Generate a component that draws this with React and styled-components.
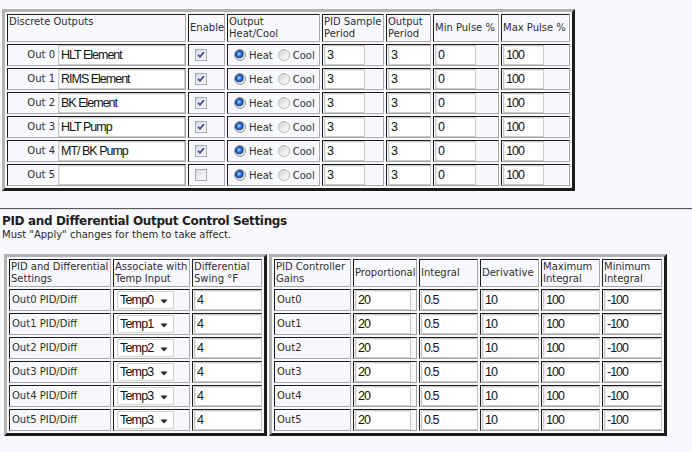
import React from 'react';
import styled, { createGlobalStyle } from 'styled-components';

const Global = createGlobalStyle`
  html, body { margin: 0; padding: 0; background: #f8f9fd; }
  body {
    font-family: "DejaVu Sans", Verdana, sans-serif;
    font-size: 10px;
    color: #2a2a2a;
  }
`;

const Page = styled.div`
  padding-top: 9px;
`;

const Indent = styled.div`
  padding-left: ${p => p.$x}px;
`;

const Grid = styled.table`
  border-collapse: separate;
  border-spacing: 2px;
  table-layout: fixed;
  box-sizing: border-box;
  width: ${p => p.$width}px;
  border: 3px solid;
  border-color: #b2b2b2 #1c1c1c #1c1c1c #b2b2b2;
  background: #f8f9fd;
`;

const Head = styled.th`
  box-sizing: border-box;
  width: ${p => p.$w}px;
  height: ${p => p.$h}px;
  border: 1px solid;
  border-color: #1c1c1c #a8a8a8 #a8a8a8 #1c1c1c;
  padding: 1px;
  font-weight: normal;
  text-align: left;
  vertical-align: ${p => (p.$top ? 'top' : 'middle')};
  line-height: 12px;
  white-space: nowrap;
  color: #2e2e2e;
`;

const Cell = styled.td`
  box-sizing: border-box;
  height: 22px;
  border: 1px solid;
  border-color: #1c1c1c #a8a8a8 #a8a8a8 #1c1c1c;
  padding: 0 ${p => (p.$flush ? 0 : 1)}px 0 1px;
  vertical-align: middle;
  line-height: 12px;
  white-space: nowrap;
  color: #2e2e2e;
`;

const NameRow = styled.div`
  display: flex;
  align-items: center;
  justify-content: flex-end;
  gap: 3px;
`;

const RowLabel = styled.span`
  padding-left: ${p => p.$pad || 0}px;
`;

const Field = styled.input`
  display: block;
  box-sizing: border-box;
  width: ${p => p.$w}px;
  height: 20px;
  margin: 0;
  padding: 0 2px;
  border: 1px solid #c8c8c8;
  box-shadow: inset 1px 1px 0 #ededed;
  background: #fff;
  font-family: "Liberation Sans", Arial, sans-serif;
  font-size: 12.5px;
  letter-spacing: -1px;
  color: #111;
  outline: none;
`;

const Check = styled.span`
  display: block;
  box-sizing: border-box;
  width: 12px;
  height: 12px;
  margin-left: 5px;
  border: 1px solid #a6a8b4;
  background: linear-gradient(135deg, #d9dae0 0%, #f4f4f6 70%, #fbfbfb 100%);
  svg { display: block; }
`;

const RadioRow = styled.div`
  display: flex;
  align-items: center;
`;

const Radio = styled.span`
  display: block;
  flex: none;
  box-sizing: border-box;
  width: 12px;
  height: 12px;
  margin-left: 5px;
  border-radius: 50%;
  border: 1px solid ${p => (p.$on ? '#8d97a8' : '#b9b9b9')};
  background: ${p =>
    p.$on
      ? 'radial-gradient(circle at 42% 40%, #cfe6ff 0, #4a8ae6 18%, #1a4fa8 40%, #233f72 48%, #dcdcdc 56%, #ffffff 100%)'
      : 'linear-gradient(135deg, #cfcfcf 0%, #ececec 55%, #ffffff 100%)'};
`;

const RadioText = styled.span`
  margin: 2px 0 0 3px;
`;

const Select = styled.div`
  display: flex;
  align-items: center;
  justify-content: space-between;
  box-sizing: border-box;
  width: 57px;
  height: 18px;
  margin-left: 2px;
  padding: 0 5px 0 2px;
  background: #fff;
  border: 1px solid #d2d2d2;
  font-family: "Liberation Sans", Arial, sans-serif;
  font-size: 12.5px;
  letter-spacing: -0.8px;
  color: #111;
  svg { display: block; margin-top: 2px; }
`;

const Rule = styled.hr`
  margin: 17px 0 4px;
  height: 0;
  border: 0;
  border-top: 1px solid #5a5a5a;
  border-bottom: 1px solid #e2e2e2;
`;

const Title = styled.h2`
  margin: 0;
  font-size: 12px;
  line-height: 15px;
  letter-spacing: -0.35px;
  font-weight: bold;
  color: #1e1e1e;
`;

const Note = styled.p`
  margin: 0;
  font-size: 10px;
  line-height: 12px;
  color: #2a2a2a;
`;

const Pair = styled.div`
  display: flex;
  align-items: flex-start;
  gap: 2px;
  margin-top: 13px;
  padding-left: 4px;
`;

const outputs = [
  { n: 0, name: 'HLT Element', on: true },
  { n: 1, name: 'RIMS Element', on: true },
  { n: 2, name: 'BK Element', on: true },
  { n: 3, name: 'HLT Pump', on: true },
  { n: 4, name: 'MT/ BK Pump', on: true },
  { n: 5, name: '', on: false },
];

const temps = ['Temp0', 'Temp1', 'Temp2', 'Temp3', 'Temp3', 'Temp3'];

function CheckBox({ on }) {
  return (
    <Check>
      {on && (
        <svg width="10" height="10" viewBox="0 0 10 10">
          <path d="M2 4.6 L4 6.8 L8 2.2" fill="none" stroke="#4c5694" strokeWidth="1.8" />
        </svg>
      )}
    </Check>
  );
}

function Arrow() {
  return (
    <svg width="8" height="5" viewBox="0 0 8 5">
      <path d="M0.5 0.5 H7.5 L4 4.5 Z" fill="#222" />
    </svg>
  );
}

export default function App() {
  return (
    <Page>
      <Global />
      <Indent $x={2}>
        <Grid $width={573}>
          <thead>
            <tr>
              <Head $w={179} $h={27} $top>Discrete Outputs</Head>
              <Head $w={37} $h={27}>Enable</Head>
              <Head $w={93} $h={27}>Output<br />Heat/Cool</Head>
              <Head $w={62} $h={27}>PID Sample<br />Period</Head>
              <Head $w={45} $h={27}>Output<br />Period</Head>
              <Head $w={66} $h={27}>Min Pulse %</Head>
              <Head $w={69} $h={27}>Max Pulse %</Head>
            </tr>
          </thead>
          <tbody>
            {outputs.map(o => (
              <tr key={o.n}>
                <Cell $flush>
                  <NameRow>
                    <RowLabel>Out {o.n}</RowLabel>
                    <Field $w={127} defaultValue={o.name} />
                  </NameRow>
                </Cell>
                <Cell>
                  <CheckBox on={o.on} />
                </Cell>
                <Cell>
                  <RadioRow>
                    <Radio $on />
                    <RadioText>Heat</RadioText>
                    <Radio />
                    <RadioText>Cool</RadioText>
                  </RadioRow>
                </Cell>
                <Cell><Field $w={41} defaultValue="3" /></Cell>
                <Cell><Field $w={43} defaultValue="3" /></Cell>
                <Cell><Field $w={41} defaultValue="0" /></Cell>
                <Cell><Field $w={41} defaultValue="100" /></Cell>
              </tr>
            ))}
          </tbody>
        </Grid>
      </Indent>

      <Rule />

      <Indent $x={2}>
        <Title>PID and Differential Output Control Settings</Title>
        <Note>Must "Apply" changes for them to take affect.</Note>
      </Indent>

      <Pair>
        <Grid $width={263}>
          <thead>
            <tr>
              <Head $w={102} $h={28}>PID and Differential<br />Settings</Head>
              <Head $w={77} $h={28}>Associate with<br />Temp Input</Head>
              <Head $w={70} $h={28}>Differential<br />Swing °F</Head>
            </tr>
          </thead>
          <tbody>
            {temps.map((t, i) => (
              <tr key={i}>
                <Cell><RowLabel $pad={1}>Out{i} PID/Diff</RowLabel></Cell>
                <Cell>
                  <Select>
                    <span>{t}</span>
                    <Arrow />
                  </Select>
                </Cell>
                <Cell><Field $w={68} defaultValue="4" /></Cell>
              </tr>
            ))}
          </tbody>
        </Grid>

        <Grid $width={398}>
          <thead>
            <tr>
              <Head $w={77} $h={28}>PID Controller<br />Gains</Head>
              <Head $w={64} $h={28}>Proportional</Head>
              <Head $w={59} $h={28}>Integral</Head>
              <Head $w={59} $h={28}>Derivative</Head>
              <Head $w={59} $h={28}>Maximum<br />Integral</Head>
              <Head $w={60} $h={28}>Minimum<br />Integral</Head>
            </tr>
          </thead>
          <tbody>
            {temps.map((_, i) => (
              <tr key={i}>
                <Cell><RowLabel $pad={1}>Out{i}</RowLabel></Cell>
                <Cell><Field $w={56} defaultValue="20" /></Cell>
                <Cell><Field $w={57} defaultValue="0.5" /></Cell>
                <Cell><Field $w={57} defaultValue="10" /></Cell>
                <Cell><Field $w={57} defaultValue="100" /></Cell>
                <Cell><Field $w={58} defaultValue="-100" /></Cell>
              </tr>
            ))}
          </tbody>
        </Grid>
      </Pair>
    </Page>
  );
}
